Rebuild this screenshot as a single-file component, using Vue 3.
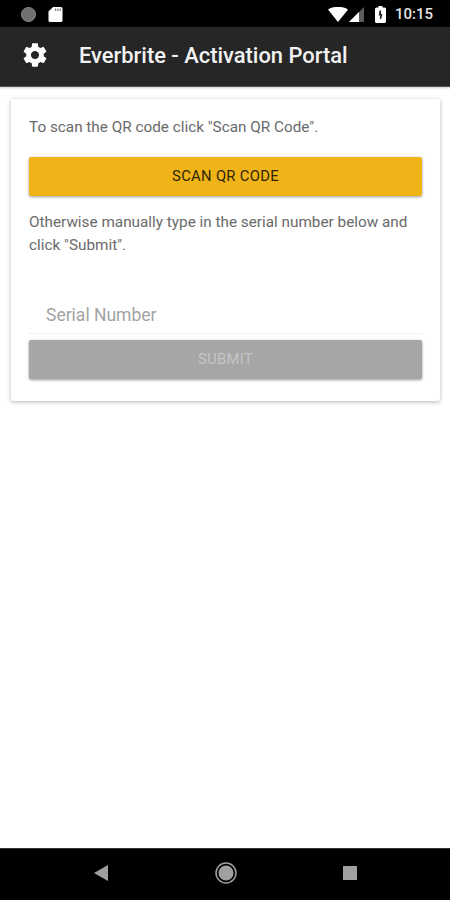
<script setup>
const title = 'Everbrite - Activation Portal'
</script>

<template>
  <div class="phone">
    <header class="status">
      <div class="status-left">
        <span class="dot"></span>
        <svg class="sd" width="15" height="16" viewBox="0 0 15 16"><path d="M5 1h8a1.5 1.5 0 0 1 1.5 1.5v12A1.5 1.5 0 0 1 13 16H2a1.5 1.5 0 0 1-1.5-1.5V5.5z" fill="#fff"/><path d="M7 2.5h1.2v2.5H7zM9.3 2.5h1.2v2.5H9.3zM11.6 2.5h1.2v2.5h-1.2z" fill="#777"/></svg>
      </div>
      <div class="status-right">
        <svg width="20" height="15" viewBox="0 0 20 15"><path d="M0 2.5C5.500-1 14.500-1 20 2.500L10 15z" fill="#fff"/></svg>
        <svg class="signal" width="15" height="15" viewBox="0 0 15 15"><path d="M15 0v15H0z" fill="#5c5c5c"/><path d="M10 5v10H0z" fill="#fff"/></svg>
        <svg class="battery" width="11" height="17" viewBox="0 0 11 17"><path d="M3.500 0h4v1.500h2A1.500 1.500 0 0 1 11 3v12.500A1.500 1.500 0 0 1 9.500 17h-8A1.500 1.500 0 0 1 0 15.500V3a1.500 1.500 0 0 1 1.500-1.500h2z" fill="#fff"/><path d="M6 4.500h-1.500L3.800 9.500h1.400L4.800 13h1.400l1.200-5H6z" fill="#222"/></svg>
        <span class="time">10:15</span>
      </div>
    </header>

    <div class="appbar">
      <svg class="gear" width="28" height="28" viewBox="0 0 24 24"><path fill="#fff" d="M19.430 12.980c.04-.32.070-.64.070-.98s-.03-.66-.07-.98l2.110-1.650c.19-.15.240-.42.120-.64l-2-3.460c-.12-.22-.39-.30-.61-.22l-2.490 1c-.52-.40-1.080-.73-1.690-.98l-.38-2.650C14.460 2.180 14.250 2 14 2h-4c-.25 0-.46.180-.49.420l-.38 2.650c-.61.250-1.170.59-1.690.98l-2.490-1c-.23-.09-.49 0-.61.220l-2 3.460c-.13.220-.07.490.12.640l2.110 1.650c-.04.320-.07.650-.07.980s.03.660.07.980l-2.110 1.650c-.19.150-.24.420-.12.640l2 3.460c.12.220.39.300.61.220l2.490-1c.52.400 1.080.730 1.690.980l.38 2.650c.3.240.24.420.49.420h4c.25 0 .46-.180.49-.420l.38-2.650c.61-.250 1.170-.590 1.690-.980l2.490 1c.23.090.49 0 .61-.220l2-3.460c.12-.220.07-.490-.12-.640l-2.110-1.650zM12 15.500c-1.930 0-3.500-1.570-3.500-3.500s1.570-3.500 3.500-3.500 3.500 1.570 3.500 3.500-1.570 3.500-3.500 3.500z"/></svg>
      <h1>{{ title }}</h1>
    </div>

    <main class="content">
      <section class="card">
        <p class="intro">To scan the QR code click "Scan QR Code".</p>
        <button class="btn scan" type="button">SCAN QR CODE</button>
        <p class="other">Otherwise manually type in the serial number below and click "Submit".</p>
        <div class="field"><span>Serial Number</span></div>
        <button class="btn submit" type="button">SUBMIT</button>
      </section>
    </main>

    <footer class="nav">
      <svg width="14" height="16" viewBox="0 0 14 16"><path d="M14 0v16L0 8z" fill="#a0a0a0"/></svg>
      <svg width="22" height="22" viewBox="0 0 22 22"><circle cx="11" cy="11" r="10" fill="none" stroke="#a0a0a0" stroke-width="1.500"/><circle cx="11" cy="11" r="7.500" fill="#a0a0a0"/></svg>
      <span class="square"></span>
    </footer>
  </div>
</template>

<style>
body { background: #fff; }
</style>

<style scoped>
.phone {
  width: 450px;
  height: 900px;
  display: flex;
  flex-direction: column;
  overflow: hidden;
  background: #fff;
  font-family: Roboto, "Liberation Sans", sans-serif;
}
.status {
  height: 27px;
  flex: none;
  background: #000;
  display: flex;
  justify-content: space-between;
  align-items: center;
  padding: 1px 17px 0 21px;
  box-sizing: border-box;
}
.status-left, .status-right { display: flex; align-items: center; }
.dot {
  width: 15px;
  height: 15px;
  border-radius: 50%;
  background: #6f6f6f;
  border: 1px solid #8a8a8a;
  box-sizing: border-box;
}
.sd { margin-left: 12px; }
.signal { margin-left: 1px; }
.battery { margin-left: 11px; }
.time { margin-left: 9px; color: #e4e4e4; font-size: 15px; font-weight: 500; }
.appbar {
  height: 60px;
  flex: none;
  background: #262626;
  border-bottom: 1px solid #555;
  box-sizing: border-box;
  display: flex;
  align-items: center;
  padding: 0 0 3px 21px;
  box-shadow: 0 1px 2px rgba(0,0,0,.2);
  position: relative;
}
.gear { flex: none; }
h1 {
  margin: 1px 0 0 30px;
  color: #f2f2f2;
  font-size: 21.900px;
  font-weight: 500;
  white-space: nowrap;
}
.content {
  flex: 1;
  padding: 12px 10px 0 11px;
}
.card {
  height: 302px;
  box-sizing: border-box;
  padding: 17px 18px 0;
  background: #fff;
  border-radius: 2px;
  box-shadow: 0 1px 4px rgba(0,0,0,.3);
}
p {
  margin: 0;
  color: #6a6a6a;
  font-size: 15.300px;
  line-height: 23px;
}
.btn {
  display: block;
  width: 100%;
  height: 39px;
  border: 0;
  border-radius: 2px;
  font-family: inherit;
  font-size: 14.800px;
  font-weight: 400;
  letter-spacing: .3px;
  padding: 0 0 2px;
}
.scan {
  margin-top: 18px;
  background: #f0b418;
  color: #2e2508;
  box-shadow: 0 1px 3px rgba(0,0,0,.4);
}
.other { margin-top: 15px; }
.field {
  margin-top: 31px;
  height: 46px;
  box-sizing: border-box;
  border-bottom: 1px solid #f0f0f0;
  padding: 17px 0 0 17px;
  font-size: 17.500px;
  color: #a3a3a3;
}
.submit {
  margin-top: 6px;
  background: #a6a6a6;
  color: #c4c4c4;
  box-shadow: 0 1px 3px rgba(0,0,0,.4);
}
.nav {
  height: 52px;
  flex: none;
  background: #000;
  border-top: 1px solid #333;
  box-sizing: border-box;
  display: flex;
  align-items: center;
  justify-content: space-between;
  padding: 0 93px 4px 94px;
}
.square {
  width: 14px;
  height: 14px;
  background: #a0a0a0;
}
</style>
